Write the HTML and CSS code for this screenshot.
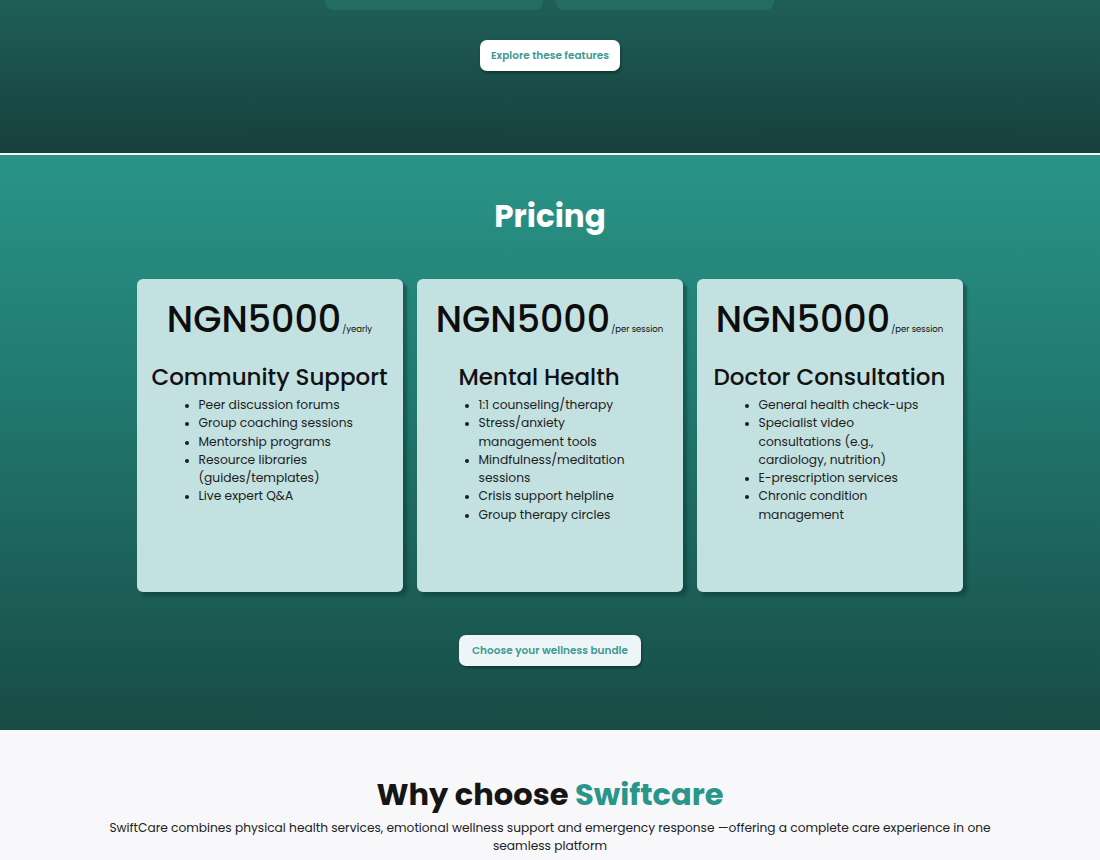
FILE: index.html
```html
<!DOCTYPE html>
<html lang="en">
<head>
<meta charset="utf-8">
<title>SwiftCare</title>
<link rel="stylesheet" href="styles.css">
</head>
<body>
<section class="features">
  <div class="feature-tails">
    <div class="tail"></div>
    <div class="tail"></div>
  </div>
  <a class="btn btn-white" href="#">Explore these features</a>
</section>
<div class="divider"></div>
<section class="pricing">
  <h2 class="pricing-title">Pricing</h2>
  <div class="plans">
    <div class="plan">
      <div class="price">NGN5000<span class="per">/yearly</span></div>
      <h3 class="plan-name">Community Support</h3>
      <ul class="plan-list">
        <li>Peer discussion forums</li>
        <li>Group coaching sessions</li>
        <li>Mentorship programs</li>
        <li>Resource libraries (guides/templates)</li>
        <li>Live expert Q&amp;A</li>
      </ul>
    </div>
    <div class="plan">
      <div class="price">NGN5000<span class="per">/per session</span></div>
      <h3 class="plan-name plan-name-left">Mental Health</h3>
      <ul class="plan-list">
        <li>1:1 counseling/therapy</li>
        <li>Stress/anxiety management tools</li>
        <li>Mindfulness/meditation sessions</li>
        <li>Crisis support helpline</li>
        <li>Group therapy circles</li>
      </ul>
    </div>
    <div class="plan">
      <div class="price">NGN5000<span class="per">/per session</span></div>
      <h3 class="plan-name">Doctor Consultation</h3>
      <ul class="plan-list">
        <li>General health check-ups</li>
        <li>Specialist video consultations (e.g., cardiology, nutrition)</li>
        <li>E-prescription services</li>
        <li>Chronic condition management</li>
      </ul>
    </div>
  </div>
  <a class="btn btn-light" href="#">Choose your wellness bundle</a>
</section>
<section class="why">
  <h2 class="why-title">Why choose <span class="accent">Swiftcare</span></h2>
  <p class="why-text">SwiftCare combines physical health services, emotional wellness support and emergency response —offering a complete care experience in one seamless platform</p>
</section>
</body>
</html>
```

FILE: styles.css
```css
* { box-sizing: border-box; }
html, body { margin: 0; padding: 0; }
body {
  font-family: "Poppins", "Inter", "Noto Sans", sans-serif;
  background: #f8f7fa;
  color: #111;
}

.features {
  height: 152px;
  background: linear-gradient(180deg, #1f5f58 0%, #163f3d 100%);
  display: flex;
  flex-direction: column;
  align-items: center;
}
.feature-tails {
  display: flex;
  gap: 13px;
  margin-left: -1px;
}
.tail {
  width: 218px;
  height: 10px;
  background: #236c63;
  border-radius: 0 0 8px 8px;
}
.btn {
  display: inline-block;
  text-decoration: none;
  font-weight: 600;
  font-size: 10.5px;
  color: #3d9a92;
  border-radius: 7px;
  height: 31px;
  line-height: 31px;
  padding: 0 11px;
  box-shadow: 1px 2px 3px rgba(0,0,0,0.35);
}
.btn-white {
  background: #ffffff;
  margin-top: 30px;
}
.divider {
  height: 3px;
  background: #f3fbfa;
  border-top: 1px solid #14403c;
}

.pricing {
  height: 575px;
  background: linear-gradient(180deg, #2a9488 0%, #217a70 40%, #184b46 100%);
  display: flex;
  flex-direction: column;
  align-items: center;
}
.pricing-title {
  margin: 41px 0 0;
  font-size: 31px;
  font-weight: 700;
  color: #ffffff;
  line-height: 40px;
}
.plans {
  display: flex;
  gap: 14px;
  margin-top: 43px;
  margin-left: -1px;
}
.plan {
  width: 266px;
  height: 313px;
  background: #c2e1e0;
  border-radius: 6px;
  box-shadow: 4px 4px 3px rgba(12, 60, 56, 0.55);
  padding: 19px 0 0;
}
.price {
  text-align: center;
  font-size: 36.5px;
  font-weight: 500;
  line-height: 44px;
  color: #0d0d0d;
  white-space: nowrap;
}
.per {
  font-size: 8.5px;
  font-weight: 400;
  margin-left: 1px;
}
.plan-name {
  margin: 12px 0 0;
  padding: 0;
  text-align: center;
  font-size: 23px;
  font-weight: 500;
  line-height: 28px;
  color: #111;
  white-space: nowrap;
}
.plan-name-left {
  text-align: left;
  padding-left: 42px;
}
.plan-list {
  margin: 5px 0 0;
  padding: 0 40px 0 62px;
  font-size: 12.25px;
  line-height: 18.3px;
  color: #1d1d1d;
}
.plan-list li::marker { font-size: 10px; }

.btn-light {
  background: #eef5f8;
  margin-top: 43px;
  padding: 0 13px;
}

.why {
  height: 130px;
  background: #f8f7fa;
  text-align: center;
  padding-top: 46px;
}
.why-title {
  margin: 0;
  font-size: 30.5px;
  font-weight: 700;
  line-height: 38px;
  color: #151515;
}
.accent { color: #2a958a; }
.why-text {
  margin: 5px auto 0;
  width: 900px;
  font-size: 12.2px;
  line-height: 17.5px;
  color: #222;
}
```
